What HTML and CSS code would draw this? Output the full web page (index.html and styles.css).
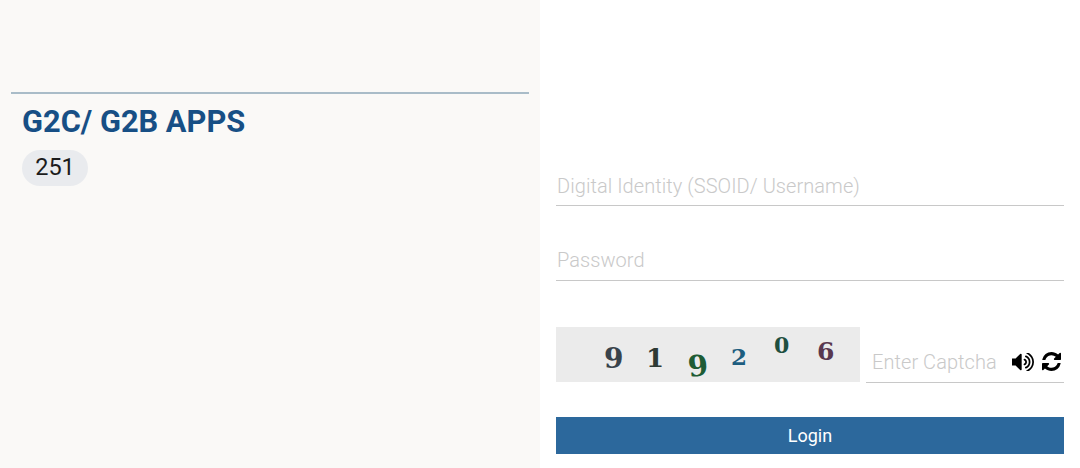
FILE: index.html
```html
<!DOCTYPE html>
<html lang="en">
<head>
<meta charset="utf-8">
<title>SSO Login</title>
<link rel="stylesheet" href="styles.css">
</head>
<body>
<div class="page">
  <section class="apps">
    <div class="apps-rule"></div>
    <h2 class="apps-title">G2C/ G2B APPS</h2>
    <span class="apps-count">251</span>
  </section>
  <section class="login">
    <div class="field field-user"><span class="placeholder">Digital Identity (SSOID/ Username)</span></div>
    <div class="field field-pass"><span class="placeholder">Password</span></div>
    <div class="captcha-row">
      <div class="captcha">
        <span class="d d1">9</span>
        <span class="d d2">1</span>
        <span class="d d3">9</span>
        <span class="d d4">2</span>
        <span class="d d5">0</span>
        <span class="d d6">6</span>
      </div>
      <div class="captcha-input">
        <span class="placeholder">Enter Captcha</span>
        <svg class="icon-sound" viewBox="128 256 1600 1280" width="22" height="18" aria-hidden="true">
          <path d="M832 352v1088q0 26-19 45t-45 19-45-19l-333-333h-262q-26 0-45-19t-19-45v-384q0-26 19-45t45-19h262l333-333q19-19 45-19t45 19 19 45zm384 544q0 76-42.500 141.500t-112.500 93.500q-10 5-25 5-26 0-45-18.500t-19-45.500q0-21 12-35.500t29-25 34-23 29-35.500 12-57-12-57-29-35.500-34-23-29-25-12-35.500q0-27 19-45.500t45-18.500q15 0 25 5 70 27 112.500 93t42.500 142zm256 0q0 153-85 282.500t-225 188.500q-13 5-25 5-27 0-46-19t-19-45q0-39 39-59 56-29 76-44 74-54 115.500-135.500t41.500-173.500-41.500-173.500-115.500-135.500q-20-15-76-44-39-20-39-59 0-26 19-45t45-19q13 0 26 5 140 59 225 188.500t85 282.500zm256 0q0 230-127 422.500t-338 283.500q-13 5-26 5-26 0-45-19t-19-45q0-36 39-59 7-4 22.500-10.500t22.500-10.500q46-25 82-51 123-91 192-227t69-289-69-289-192-227q-36-26-82-51-7-4-22.500-10.500t-22.500-10.500q-39-23-39-59 0-26 19-45t45-19q13 0 26 5 211 91 338 283.500t127 422.500z" fill="#000"/>
        </svg>
        <svg class="icon-refresh" viewBox="128 128 1536 1536" width="19" height="19" aria-hidden="true">
          <path d="M1639 1056q0 5-1 7-64 268-268 434.500t-478 166.500q-146 0-282.500-55t-243.500-157l-129 129q-19 19-45 19t-45-19-19-45v-448q0-26 19-45t45-19h448q26 0 45 19t19 45-19 45l-137 137q71 66 161 102t187 36q134 0 250-65t186-179q11-17 53-117 8-23 30-23h192q13 0 22.500 9.500t9.500 22.500zm25-800v448q0 26-19 45t-45 19h-448q-26 0-45-19t-19-45 19-45l138-138q-148-137-349-137-134 0-250 65t-186 179q-11 17-53 117-8 23-30 23h-199q-13 0-22.500-9.500t-9.500-22.5v-7q65-268 270-434.500t480-166.500q146 0 284 55.500t245 156.500l130-129q19-19 45-19t45 19 19 45z" fill="#000"/>
        </svg>
      </div>
    </div>
    <button class="login-btn" type="button">Login</button>
  </section>
</div>
</body>
</html>
```
FILE: styles.css
```css
* { box-sizing: border-box; }
html, body { margin: 0; padding: 0; }
body {
  width: 1080px;
  height: 468px;
  overflow: hidden;
  background: #fff;
  font-family: Roboto, "Liberation Sans", sans-serif;
}
.page { display: flex; height: 468px; }

.apps {
  width: 540px;
  background: #faf9f7;
  padding: 92px 11px 0;
}
.apps-rule { height: 2px; background: #a9bcc8; }
.apps-title {
  margin: 9px 0 0 11px;
  font-size: 30.800px;
  line-height: 38px;
  font-weight: 700;
  color: #174f85;
}
.apps-count {
  display: inline-block;
  margin: 9px 0 0 11px;
  width: 66px;
  height: 36px;
  border-radius: 18px;
  background: #e9ebee;
  color: #1c1c1c;
  font-size: 23.500px;
  line-height: 34px;
  text-align: center;
}

.login {
  flex: 1;
  padding: 0 16px 0 16px;
  display: flex;
  flex-direction: column;
}
.placeholder {
  color: #c9c9c9;
  font-size: 20px;
  font-weight: 300;
  letter-spacing: 0.06px;
  white-space: nowrap;
}
.field {
  height: 40px;
  padding-left: 1px;
  border-bottom: 1px solid #c8c8c8;
  line-height: 41px;
}
.field-user { margin-top: 166px; }
.field-pass { margin-top: 34px; height: 41px; line-height: 41px; }

.captcha-row {
  display: flex;
  margin-top: 46px;
  gap: 6px;
}
.captcha {
  position: relative;
  width: 304px;
  height: 55px;
  background: #ebebeb;
}
.d {
  position: absolute;
  font-family: "DejaVu Serif", "Liberation Serif", serif;
  font-weight: 700;
  line-height: 1;
}
.d1 { left: 48px; top: 18px; font-size: 28px; color: #39434b; }
.d2 { left: 90px; top: 18px; font-size: 26px; color: #2e3a34; }
.d3 { left: 132px; top: 25px; font-size: 29px; color: #1e5c35; transform: rotate(-6deg); }
.d4 { left: 175px; top: 18px; font-size: 23px; color: #1d5d7f; }
.d5 { left: 218px; top: 7px; font-size: 22px; color: #1f4f3f; }
.d6 { left: 261px; top: 12px; font-size: 25px; color: #59384f; }

.captcha-input {
  flex: 1;
  display: flex;
  align-items: center;
  height: 56px;
  padding: 14px 3px 0 6px;
  border-bottom: 1px solid #c8c8c8;
}
.icon-sound { margin-left: 15px; flex: none; }
.icon-refresh { margin-left: 8px; flex: none; }

.login-btn {
  margin-top: 34px;
  height: 37px;
  border: 0;
  padding: 0;
  background: #2c689c;
  color: #fff;
  font-family: inherit;
  font-size: 18px;
  font-weight: 400;
}
```
